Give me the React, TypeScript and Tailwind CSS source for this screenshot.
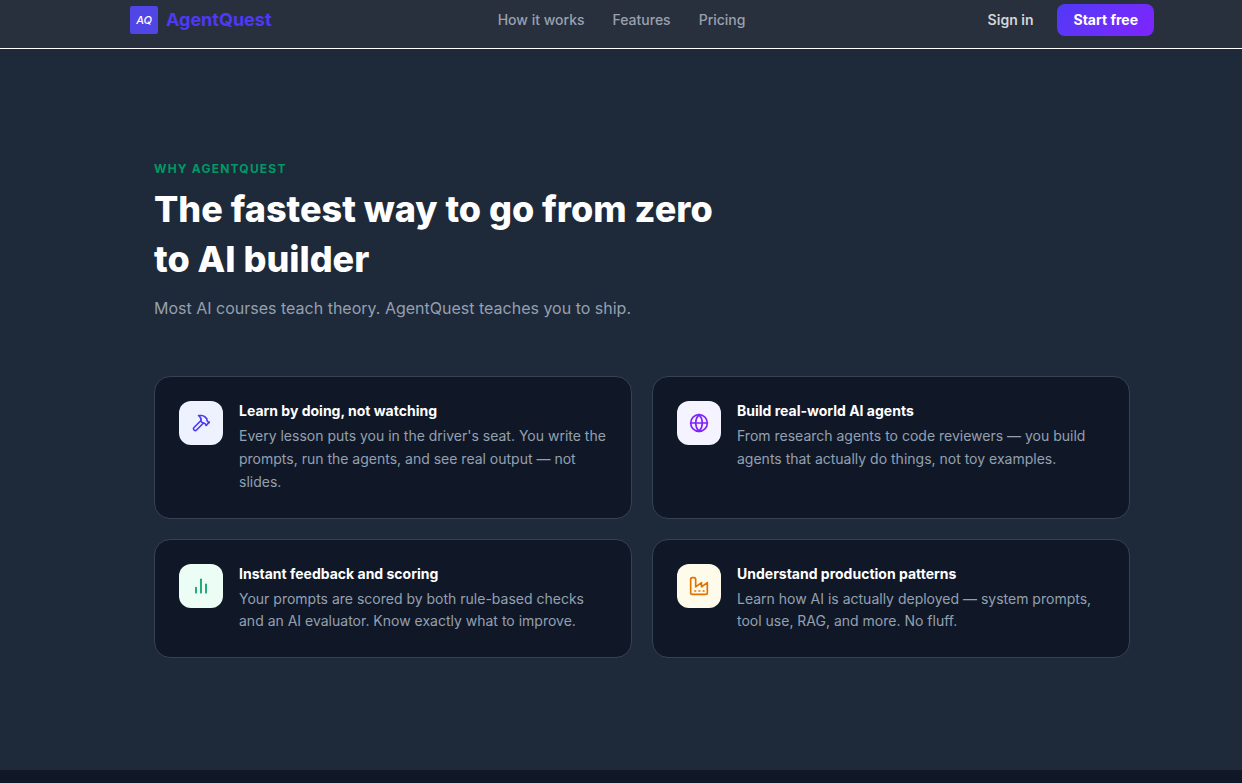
import type { ReactNode } from "react";

function Icon({ children }: { children: ReactNode }){
	return(
	<svg width="20" height="20" viewBox="0 0 24 24" fill="none" stroke="currentColor" strokeWidth="2" strokeLinecap="round" strokeLinejoin="round">
		{children}
	</svg>
	)
}

function Header(){
	return(
	<header className="h-[49px] border-b border-white bg-[#29303d] pt-1 pl-[42px]">
		<div className="mx-auto flex h-8 max-w-5xl items-center justify-between">
			<a href="#" className="flex items-center gap-2">
				<span className="flex size-7 items-center justify-center rounded-xs bg-[#4f46e5] text-[11px] font-medium italic tracking-tight text-white">AQ</span>
				<span className="text-lg font-bold text-[#4f39f6]">AgentQuest</span>
			</a>
			<nav className="mr-4 flex items-center gap-7 text-sm font-medium text-[#99a1af]">
				<a href="#how">How it works</a>
				<a href="#features">Features</a>
				<a href="#pricing">Pricing</a>
			</nav>
			<div className="flex items-center gap-6 text-sm">
				<a href="#signin" className="font-semibold text-[#d1d5dc]">Sign in</a>
				<a href="#start" className="flex h-8 items-center rounded-lg bg-linear-135 from-[#4f39f6] to-[#7f22fe] px-4 font-bold text-white">Start free</a>
			</div>
		</div>
	</header>
	)
}

type CardProps = {
	icon: ReactNode;
	color: string;
	title: string;
	children: ReactNode;
}

function Card({ icon, color, title, children }: CardProps){
	return(
	<div className="flex gap-4 rounded-2xl border border-[#364153] bg-[#101828] p-6">
		<div className={`flex size-11 shrink-0 items-center justify-center rounded-xl ${color}`}>{icon}</div>
		<div>
			<h3 className="mb-1 text-sm font-bold text-white">{title}</h3>
			<p className="text-sm leading-relaxed text-[#94a0b0]">{children}</p>
		</div>
	</div>
	)
}

const hammer = (
	<Icon>
		<path d="m15 12-8.373 8.373a1 1 0 1 1-3-3L12 9" />
		<path d="m18 15 4-4" />
		<path d="m21.5 11.5-1.914-1.914A2 2 0 0 1 19 8.172V7l-2.26-2.26a6 6 0 0 0-4.202-1.756L9 2.96l.92.82A6.18 6.18 0 0 1 12 8.4V10l2 2h1.172a2 2 0 0 1 1.414.586L18.5 14.5" />
	</Icon>
)

const globe = (
	<Icon>
		<circle cx="12" cy="12" r="10" />
		<path d="M12 2a14.5 14.5 0 0 0 0 20 14.5 14.5 0 0 0 0-20" />
		<path d="M2 12h20" />
	</Icon>
)

const bars = (
	<Icon>
		<path d="M18 20V10" />
		<path d="M12 20V4" />
		<path d="M6 20v-6" />
	</Icon>
)

const factory = (
	<Icon>
		<path d="M2 20a2 2 0 0 0 2 2h16a2 2 0 0 0 2-2V8l-7 5V8l-7 5V4a2 2 0 0 0-2-2H4a2 2 0 0 0-2 2Z" />
		<path d="M17 18h1" />
		<path d="M12 18h1" />
		<path d="M7 18h1" />
	</Icon>
)

export default function App(){
	return(
	<div className="h-[783px] overflow-hidden bg-[#101828] font-['Inter',sans-serif]">
		<Header />
		<section className="h-[721px] bg-[#1e2939] pt-28 pl-[42px]">
			<div className="mx-auto max-w-5xl px-6">
				<p className="text-xs font-bold tracking-widest text-[#009966] uppercase">Why AgentQuest</p>
				<h2 className="mt-[7px] max-w-xl text-4xl leading-[50.2px] font-extrabold text-white">The fastest way to go from zero to AI builder</h2>
				<p className="mt-3 text-base text-[#94a0b0]">Most AI courses teach theory. AgentQuest teaches you to ship.</p>
				<div className="mt-14 grid grid-cols-2 gap-5">
					<Card icon={hammer} color="bg-[#eef2ff] text-[#4f39f6]" title="Learn by doing, not watching">
						Every lesson puts you in the driver's seat. You write the prompts, run the agents, and see real output — not slides.
					</Card>
					<Card icon={globe} color="bg-[#f5f3ff] text-[#7f22fe]" title="Build real-world AI agents">
						From research agents to code reviewers — you build agents that actually do things, not toy examples.
					</Card>
					<Card icon={bars} color="bg-[#ecfdf5] text-[#009966]" title="Instant feedback and scoring">
						Your prompts are scored by both rule-based checks and an AI evaluator. Know exactly what to improve.
					</Card>
					<Card icon={factory} color="bg-[#fffbeb] text-[#e17100]" title="Understand production patterns">
						Learn how AI is actually deployed — system prompts, tool use, RAG, and more. No fluff.
					</Card>
				</div>
			</div>
		</section>
	</div>
	)
}
